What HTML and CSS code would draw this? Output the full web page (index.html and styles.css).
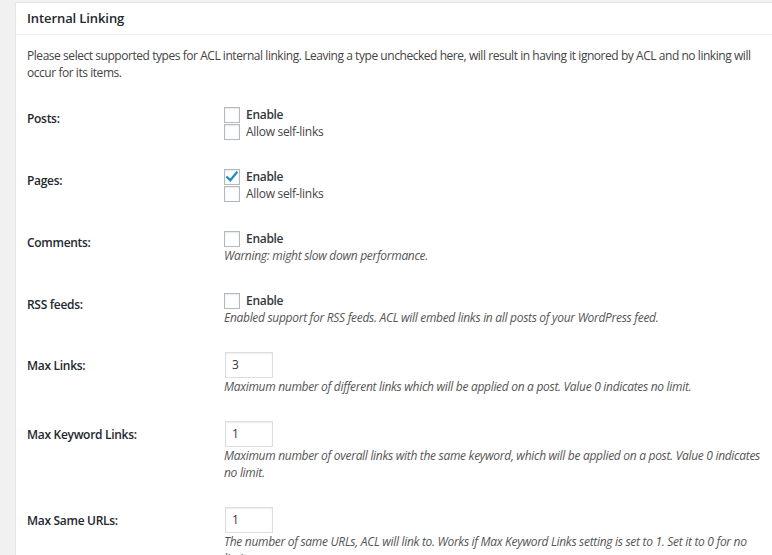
FILE: index.html
```html
<!DOCTYPE html>
<html lang="en">
<head>
<meta charset="utf-8">
<title>Internal Linking</title>
<link rel="stylesheet" href="styles.css">
</head>
<body>
<div class="wrap">
  <div class="panel">
    <div class="panel-header">Internal Linking</div>
    <div class="panel-body">
      <p class="intro">Please select supported types for ACL internal linking. Leaving a type unchecked here, will result in having it ignored by ACL and no linking will occur for its items.</p>

      <div class="row">
        <div class="row-label check-label">Posts:</div>
        <div class="row-field">
          <label class="opt"><span class="box"></span><span class="opt-main">Enable</span></label>
          <label class="opt"><span class="box"></span><span class="opt-sub">Allow self-links</span></label>
        </div>
      </div>

      <div class="row">
        <div class="row-label check-label">Pages:</div>
        <div class="row-field">
          <label class="opt"><span class="box"><svg class="tick" viewBox="0 0 16 16" width="16" height="16"><path d="M3.2 8.2 L6.3 11.3 L12.6 3.6" fill="none" stroke="#1e8cbe" stroke-width="2.2" stroke-linecap="square"/></svg></span><span class="opt-main">Enable</span></label>
          <label class="opt"><span class="box"></span><span class="opt-sub">Allow self-links</span></label>
        </div>
      </div>

      <div class="row">
        <div class="row-label check-label">Comments:</div>
        <div class="row-field">
          <label class="opt"><span class="box"></span><span class="opt-main">Enable</span></label>
          <p class="desc">Warning: might slow down performance.</p>
        </div>
      </div>

      <div class="row">
        <div class="row-label check-label">RSS feeds:</div>
        <div class="row-field">
          <label class="opt"><span class="box"></span><span class="opt-main">Enable</span></label>
          <p class="desc">Enabled support for RSS feeds. ACL will embed links in all posts of your WordPress feed.</p>
        </div>
      </div>

      <div class="row row-input">
        <div class="row-label input-label">Max Links:</div>
        <div class="row-field">
          <div class="num">3</div>
          <p class="desc">Maximum number of different links which will be applied on a post. Value 0 indicates no limit.</p>
        </div>
      </div>

      <div class="row row-input">
        <div class="row-label input-label">Max Keyword Links:</div>
        <div class="row-field">
          <div class="num">1</div>
          <p class="desc">Maximum number of overall links with the same keyword, which will be applied on a post. Value 0 indicates no limit.</p>
        </div>
      </div>

      <div class="row row-input">
        <div class="row-label input-label">Max Same URLs:</div>
        <div class="row-field">
          <div class="num">1</div>
          <p class="desc">The number of same URLs, ACL will link to. Works if Max Keyword Links setting is set to 1. Set it to 0 for no limits.</p>
        </div>
      </div>
    </div>
  </div>
</div>
</body>
</html>
```
FILE: styles.css
```css
html, body {
  margin: 0;
  padding: 0;
}
body {
  background: #f1f1f1;
  font-family: "Open Sans", "Noto Sans", sans-serif;
  font-size: 12px;
  letter-spacing: -0.3px;
  color: #444;
  overflow: hidden;
}
.wrap {
  padding: 2px 0 0 15px;
}
.panel {
  width: 820px;
  background: #fff;
  border: 1px solid #e5e5e5;
  height: 600px;
}
.panel-header {
  height: 31px;
  line-height: 31px;
  padding: 0 11px;
  border-bottom: 1px solid #eee;
  font-size: 13px;
  font-weight: 600;
  color: #23282d;
  letter-spacing: -0.1px;
}
.panel-body {
  padding: 0 11px;
  width: 745px;
}
.intro {
  margin: 12px 0 11px;
  line-height: 17px;
  color: #444;
  letter-spacing: -0.45px;
}
.row {
  display: flex;
  align-items: flex-start;
  padding: 14px 0 14px;
}
.row-input {
  padding: 12px 0 14px;
}
.row-label {
  width: 197px;
  flex: none;
  font-weight: 600;
  color: #23282d;
  line-height: 17px;
}
.check-label {
  padding-top: 4px;
}
.input-label {
  padding-top: 5px;
}
.row-field {
  flex: 1;
  min-width: 0;
}
.opt {
  display: flex;
  align-items: center;
  height: 17px;
}
.box {
  width: 14px;
  height: 14px;
  border: 1px solid #b4b9be;
  background: #fff;
  box-shadow: inset 0 1px 2px rgba(0, 0, 0, 0.1);
  margin-right: 6px;
  position: relative;
  flex: none;
}
.tick {
  position: absolute;
  left: -1px;
  top: -1px;
}
.opt-main {
  font-weight: 600;
  color: #32373c;
}
.opt-sub {
  color: #444;
}
.desc {
  margin: 0;
  font-style: italic;
  color: #555;
  line-height: 17px;
}
.num {
  width: 34px;
  height: 24px;
  line-height: 24px;
  margin-left: 1px;
  padding: 0 6px;
  border: 1px solid #ddd;
  box-shadow: inset 0 1px 2px rgba(0, 0, 0, 0.07);
  color: #32373c;
  background: #fff;
}
```
